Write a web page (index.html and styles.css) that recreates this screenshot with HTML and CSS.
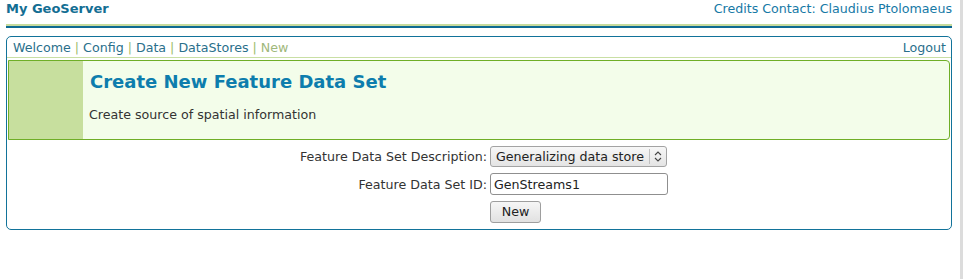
FILE: index.html
```html
<!DOCTYPE html>
<html>
<head>
<meta charset="utf-8">
<title>My GeoServer</title>
<link rel="stylesheet" href="styles.css">
</head>
<body>
<div class="page">
  <header class="top">
    <div class="brand">My GeoServer</div>
    <div class="credits">Credits Contact: Claudius Ptolomaeus</div>
  </header>
  <div class="rule-green"></div>
  <div class="rule-blue"></div>

  <div class="box">
    <nav class="nav">
      <div class="crumbs">
        <a>Welcome</a><span class="sep">|</span><a>Config</a><span class="sep">|</span><a>Data</a><span class="sep">|</span><a>DataStores</a><span class="sep">|</span><span class="current">New</span>
      </div>
      <a class="logout">Logout</a>
    </nav>

    <section class="panel">
      <div class="panel-side"></div>
      <div class="panel-body">
        <h1 class="panel-title">Create New Feature Data Set</h1>
        <p class="panel-text">Create source of spatial information</p>
      </div>
    </section>

    <form class="form">
      <label class="lbl">Feature Data Set Description:</label>
      <div class="select">
        <span class="select-text">Generalizing data store</span>
        <span class="select-arrow">
          <svg width="8" height="11" viewBox="0 0 8 11"><path d="M1 4 L4 1 L7 4 M1 7 L4 10 L7 7" fill="none" stroke="#444" stroke-width="1.1"/></svg>
        </span>
      </div>
      <label class="lbl">Feature Data Set ID:</label>
      <div class="input">GenStreams1</div>
      <span></span>
      <div class="btn">New</div>
    </form>
  </div>
</div>
</body>
</html>
```

FILE: styles.css
```css
html {
  background: linear-gradient(to left, #dcdcdc 3px, #ffffff 3px);
  min-height: 100%;
}
body {
  margin: 0;
  font-family: "DejaVu Sans", Verdana, sans-serif;
  font-size: 12.65px;
}
.page {
  width: 946px;
  padding: 0 0 0 6px;
}
.top {
  display: flex;
  justify-content: space-between;
  align-items: flex-start;
  height: 24px;
}
.brand {
  font-weight: bold;
  font-size: 13px;
  color: #136e93;
  line-height: 16px;
  padding-top: 1px;
}
.credits {
  color: #1679a6;
  line-height: 16px;
  padding-top: 1px;
}
.rule-green {
  height: 2px;
  background: #c6db9d;
}
.rule-blue {
  height: 2px;
  background: #0e6a92;
}
.box {
  margin-top: 8px;
  border: 1px solid #12739a;
  border-radius: 5px;
  height: 194px;
  box-sizing: border-box;
}
.nav {
  display: flex;
  justify-content: space-between;
  align-items: center;
  height: 21px;
  padding: 1px 5px 0 6px;
  border-bottom: 1px solid #c9dfa4;
  color: #2a6f8b;
  box-sizing: border-box;
}
.nav a {
  color: #2a6f8b;
  text-decoration: none;
}
.sep {
  color: #9cbc6c;
  margin: 0 4px;
}
.current {
  color: #9fb87b;
}
.panel {
  display: flex;
  margin: 2px 1px 0 1px;
  height: 80px;
  border: 1px solid #6fae27;
  border-radius: 0 4px 4px 0;
  background: #f3fdea;
  box-sizing: border-box;
}
.panel-side {
  width: 74px;
  background: #c7df9e;
}
.panel-body {
  padding: 9px 0 0 7px;
}
.panel-title {
  margin: 0;
  font-size: 18px;
  font-weight: bold;
  color: #0d7dad;
  line-height: 24px;
}
.panel-text {
  margin: 13px 0 0 -1px;
  color: #333333;
  line-height: 16px;
}
.form {
  display: grid;
  grid-template-columns: auto auto;
  justify-content: center;
  column-gap: 3px;
  row-gap: 6px;
  align-items: center;
  margin: 6px 0 0 10px;
}
.lbl {
  text-align: right;
  color: #333333;
}
.select {
  display: flex;
  align-items: center;
  width: 177px;
  height: 21px;
  box-sizing: border-box;
  border: 1px solid #a3a3a3;
  border-radius: 3px;
  background: linear-gradient(#f7f7f7, #e4e4e4);
  color: #222;
}
.select-text {
  flex: 1;
  padding-left: 5px;
  white-space: nowrap;
  overflow: hidden;
}
.select-arrow {
  display: flex;
  align-items: center;
  justify-content: center;
  width: 16px;
  flex: none;
  height: 15px;
  border-left: 1px solid #c0c0c0;
}
.input {
  width: 178px;
  height: 22px;
  box-sizing: border-box;
  border: 1px solid #8f8f8f;
  border-radius: 3px;
  background: #fff;
  color: #222;
  padding: 3px 0 0 3px;
}
.btn {
  width: 51px;
  height: 22px;
  box-sizing: border-box;
  border: 1px solid #9e9e9e;
  border-radius: 3px;
  background: linear-gradient(#f6f6f6, #e1e1e1);
  color: #222;
  text-align: center;
  line-height: 20px;
}
```
